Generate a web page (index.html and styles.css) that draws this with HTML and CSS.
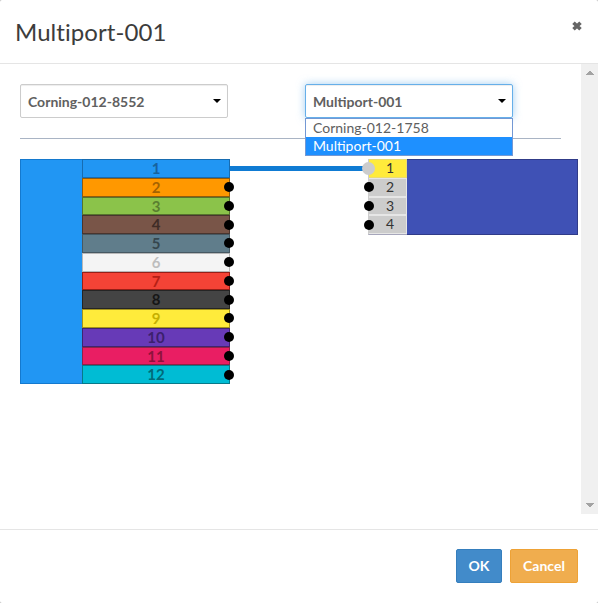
FILE: index.html
```html
<!DOCTYPE html>
<html lang="en">
<head>
<meta charset="utf-8">
<title>Multiport-001</title>
<link rel="stylesheet" href="styles.css">
</head>
<body>
<div class="modal">
  <header class="modal-header">
    <h1>Multiport-001</h1>
    <svg class="close" width="10" height="10" viewBox="0 0 10 10"><path d="M1.5 1.7 L8.5 8.3 M8.5 1.7 L1.5 8.3"/></svg>
  </header>
  <main class="modal-body">
    <div class="content">
      <div class="selectors">
        <div class="select"><span>Corning-012-8552</span><svg width="8" height="4" viewBox="0 0 8 4"><path d="M0 0H8L4 4Z"/></svg></div>
        <div class="select focused"><span>Multiport-001</span><svg width="8" height="4" viewBox="0 0 8 4"><path d="M0 0H8L4 4Z"/></svg>
          <ul class="menu"><li>Corning-012-1758</li><li class="active">Multiport-001</li></ul>
        </div>
      </div>
      <div class="diagram">
        <div class="cable">
          <div class="cable-body"></div>
          <div class="fibers">
            <div class="fiber blue"><b>1</b></div>
            <div class="fiber orange"><b>2</b><i class="dot"></i></div>
            <div class="fiber green"><b>3</b><i class="dot"></i></div>
            <div class="fiber brown"><b>4</b><i class="dot"></i></div>
            <div class="fiber slate"><b>5</b><i class="dot"></i></div>
            <div class="fiber white"><b>6</b><i class="dot"></i></div>
            <div class="fiber red"><b>7</b><i class="dot"></i></div>
            <div class="fiber black"><b>8</b><i class="dot"></i></div>
            <div class="fiber yellow"><b>9</b><i class="dot"></i></div>
            <div class="fiber violet"><b>10</b><i class="dot"></i></div>
            <div class="fiber rose"><b>11</b><i class="dot"></i></div>
            <div class="fiber aqua"><b>12</b><i class="dot"></i></div>
          </div>
        </div>
        <div class="link"></div>
        <div class="device">
          <div class="ports">
            <div class="port used"><span>1</span><i class="dot"></i></div>
            <div class="port"><span>2</span><i class="dot"></i></div>
            <div class="port"><span>3</span><i class="dot"></i></div>
            <div class="port"><span>4</span><i class="dot"></i></div>
          </div>
          <div class="device-body"></div>
        </div>
      </div>
    </div>
    <div class="scrollbar">
      <svg width="8" height="4" viewBox="0 0 8 4" shape-rendering="crispEdges"><path d="M3 0h2v1h1v1h1v1h1v1H0V3h1V2h1V1h1z"/></svg>
      <svg width="8" height="4" viewBox="0 0 8 4" shape-rendering="crispEdges"><path d="M0 0h8v1H7v1H6v1H5v1H3V3H2V2H1V1H0z"/></svg>
    </div>
  </main>
  <footer class="modal-footer">
    <button class="ok">OK</button>
    <button class="cancel">Cancel</button>
  </footer>
</div>
</body>
</html>
```
FILE: styles.css
```css
* { box-sizing: border-box; }
body { margin: 0; background: #bbb; font-family: Lato, sans-serif; font-size: 14px; color: #333; }
.modal { width: 598px; height: 603px; background: #fff; border-radius: 2px; display: flex; flex-direction: column; }
.modal-header { height: 64px; border-bottom: 1px solid #e5e5e5; padding: 0 15px; display: flex; justify-content: space-between; }
h1 { margin: 15px 0 0; font-size: 24px; line-height: 34px; font-weight: 400; letter-spacing: .07px; color: #3c3c3c; }
.close { margin: 21px 1px 0 0; stroke: #666; stroke-width: 3.6; overflow: visible; }
.modal-body { height: 465px; display: flex; }
.content { width: 581px; padding: 20px 3px 0 20px; }
.selectors { width: 541px; height: 55px; border-bottom: 1px solid #a9b4c4; display: flex; gap: 77px; }
.select { position: relative; width: 208px; height: 34px; border: 1px solid #ccc; border-radius: 2px; box-shadow: inset 0 1px 1px rgba(0,0,0,.075); padding: 0 7px; display: flex; align-items: center; justify-content: space-between; font-weight: 700; color: #606060; }
.select svg { margin: -1px -1px 0 0; }
.focused { border-color: #66afe9; box-shadow: inset 0 1px 1px rgba(0,0,0,.075), 0 0 8px rgba(102,175,233,.6); }
.menu { position: absolute; z-index: 2; left: -1px; top: 33px; width: 208px; height: 38px; margin: 0; padding: 0; list-style: none; border: 1px solid #7398d4; background: #fff; font-weight: 400; line-height: 18px; }
.menu li { padding-left: 7px; height: 18px; }
.menu .active { background: #1e90ff; color: #fff; }
.diagram { margin-top: 20px; display: flex; align-items: flex-start; }
.cable { width: 210px; height: 225px; display: flex; }
.cable-body { width: 62px; background: #2196f3; border: 1px solid #1479ce; border-right: 0; }
.fibers { width: 148px; display: grid; grid-template-rows: repeat(12, 18.75px); }
.fiber { position: relative; border: 1px solid; text-align: center; line-height: 17px; font-size: 15px; }
.dot { position: absolute; width: 10px; height: 10px; border-radius: 50%; background: #000; top: 3.4px; right: -5px; }
.blue { background: #2196f3; border-color: #176cb1; color: #17629e; }
.orange { background: #ff9800; border-color: #925b0b; color: #a66300; }
.green { background: #8bc34a; border-color: #56742d; color: #5a7f30; }
.brown { background: #795548; border-color: #49352e; color: #402c26; }
.slate { background: #607d8b; border-color: #465862; color: #35464e; }
.white { background: #f4f4f4; border-color: #b8b8b8; color: #bebebe; }
.red { background: #f44336; border-color: #971e16; color: #b51f15; }
.black { background: #444; border-color: #252525; color: #161616; }
.yellow { background: #ffeb3b; border-color: #a4931b; color: #c6b000; }
.violet { background: #673ab7; border-color: #40256f; color: #3c206d; }
.rose { background: #e91e63; border-color: #8f2148; color: #8e123c; }
.aqua { background: #00bcd4; border-color: #087989; color: #006b79; }
.link { width: 138px; height: 5px; margin-top: 7px; background: #0f7bd3; }
.device { width: 210px; height: 76px; display: flex; }
.ports { width: 39px; display: grid; grid-template-rows: repeat(4, 18.75px); border-left: 1px solid #ccc; border-bottom: 1px solid #a6a6bb; }
.port { position: relative; background: #ccc; border: 1px solid #e6e6e6; border-left: 0; padding-left: 5px; text-align: center; line-height: 16px; }
.port .dot { right: auto; left: -5px; }
.used { background: #ffeb3b; border-color: #eadc72; }
.port.used .dot { width: 13px; height: 13px; background: #ccc; top: 2px; left: -7px; }
.device-body { flex: 1; background: #3f51b5; border: 1px solid #303b88; border-left: 0; }
.scrollbar { width: 17px; height: 450px; padding: 7px 0; background: #f0f0f0; display: flex; flex-direction: column; justify-content: space-between; align-items: center; fill: #a3a3a3; }
.modal-footer { height: 74px; border-top: 1px solid #e5e5e5; padding: 19px 20px 0; display: flex; justify-content: flex-end; gap: 8px; }
button { height: 34px; padding: 0 0 2px; border: 1px solid; border-radius: 2px; font: 700 14px Lato, sans-serif; color: #fff; }
.ok { width: 46px; background: #428bca; border-color: #357ebd; }
.cancel { width: 68px; background: #f0ad4e; border-color: #eea236; }
```
